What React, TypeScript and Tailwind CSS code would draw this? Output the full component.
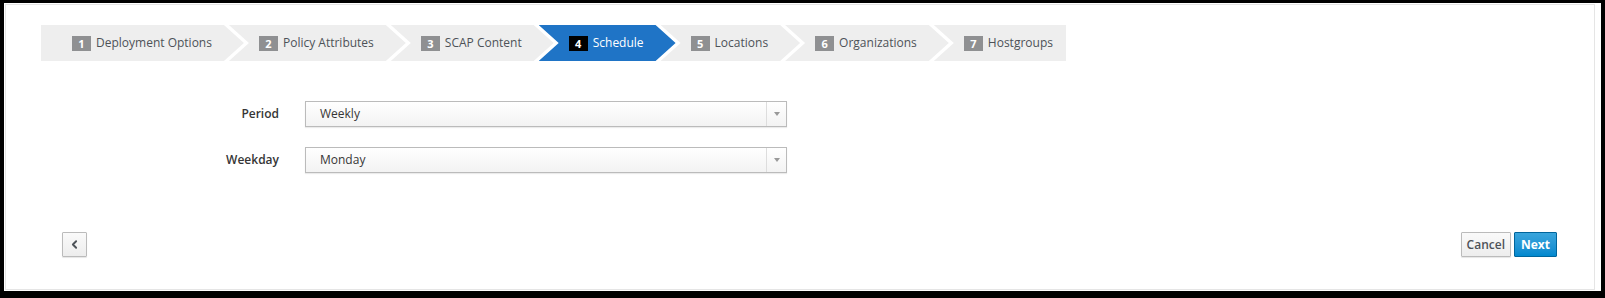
import React from 'react';
import { ChevronLeft } from 'lucide-react';

const steps = [
  'Deployment Options',
  'Policy Attributes',
  'SCAP Content',
  'Schedule',
  'Locations',
  'Organizations',
  'Hostgroups',
];

const ACTIVE = 3;

const clipFirst = '[clip-path:polygon(0_0,calc(100%_-_20px)_0,100%_50%,calc(100%_-_20px)_100%,0_100%)]';
const clipMid = '[clip-path:polygon(0_0,calc(100%_-_20px)_0,100%_50%,calc(100%_-_20px)_100%,0_100%,20px_50%)]';
const clipLast = '[clip-path:polygon(0_0,100%_0,100%_100%,0_100%,20px_50%)]';

const WizardSteps: React.FC = () => (
  <div className="flex h-[36px]">
    {steps.map((label, i) => {
      const first = i === 0;
      const last = i === steps.length - 1;
      const active = i === ACTIVE;
      const clip = first ? clipFirst : last ? clipLast : clipMid;
      return (
        <div
          key={label}
          className={`flex items-center h-full ${clip} ${first ? 'pl-[31px]' : 'pl-[30px] -ml-[15px]'} ${last ? 'pr-[13px]' : 'pr-[32px]'} ${active ? 'bg-[#1f74c6] text-white' : 'bg-[#eeeeee] text-[#4d5258]'}`}
        >
          <span
            className={`flex items-center justify-center w-[19px] h-[15px] text-[11px] font-bold text-white leading-none ${active ? 'bg-black' : 'bg-[#8f9092]'}`}
          >
            {i + 1}
          </span>
          <span className="ml-[5px] text-[12px] leading-none">{label}</span>
        </div>
      );
    })}
  </div>
);

const SelectField: React.FC<{ label: string; value: string }> = ({ label, value }) => (
  <div className="flex items-center">
    <label className="w-[299px] pr-[26px] text-right text-[12px] font-semibold text-[#363636]">{label}</label>
    <div className="flex w-[482px] h-[26px] border border-[#bbbbbb] bg-gradient-to-b from-white to-[#f3f3f3] shadow-[0_1px_1px_rgba(0,0,0,0.08)]">
      <span className="flex-1 flex items-center pl-[14px] text-[12px] text-[#363636]">{value}</span>
      <span className="w-[20px] flex items-center justify-center border-l border-[#dddddd]">
        <span className="w-0 h-0 border-l-[3px] border-r-[3px] border-t-[4px] border-l-transparent border-r-transparent border-t-[#999999]" />
      </span>
    </div>
  </div>
);

const App: React.FC = () => {
  return (
    <div className="w-[1605px] h-[298px] bg-black pl-[4px] pt-[3px] pr-[4px] pb-[7px] font-['Open_Sans',sans-serif]">
      <div className="h-full bg-white pl-px pt-px pr-[6px] pb-px">
        <div className="h-full border border-[#e5e5e5] flex flex-col">
          <div className="ml-[35px] mt-[20px]">
            <WizardSteps />
          </div>

          <div className="mt-[40px] flex flex-col gap-[20px]">
            <SelectField label="Period" value="Weekly" />
            <SelectField label="Weekday" value="Monday" />
          </div>

          <div className="mt-[59px] ml-[56px] mr-[37px] flex items-center justify-between">
            <button className="w-[25px] h-[25px] flex items-center justify-center border border-[#bbbbbb] rounded-[1px] bg-gradient-to-b from-[#fafafa] to-[#ededed] shadow-[0_1px_1px_rgba(0,0,0,0.1)]">
              <ChevronLeft size={13} strokeWidth={3.5} className="text-[#4d5258]" />
            </button>
            <div className="flex gap-[3px]">
              <button className="h-[25px] px-[5px] text-[12px] font-semibold text-[#4d5258] border border-[#bbbbbb] rounded-[1px] bg-gradient-to-b from-[#fafafa] to-[#ededed] shadow-[0_1px_1px_rgba(0,0,0,0.1)]">
                Cancel
              </button>
              <button className="h-[25px] px-[6px] text-[12px] font-bold text-white border border-[#00659c] rounded-[1px] bg-gradient-to-b from-[#39a5dc] to-[#0088ce]">
                Next
              </button>
            </div>
          </div>
        </div>
      </div>
    </div>
  );
};

export default App;
